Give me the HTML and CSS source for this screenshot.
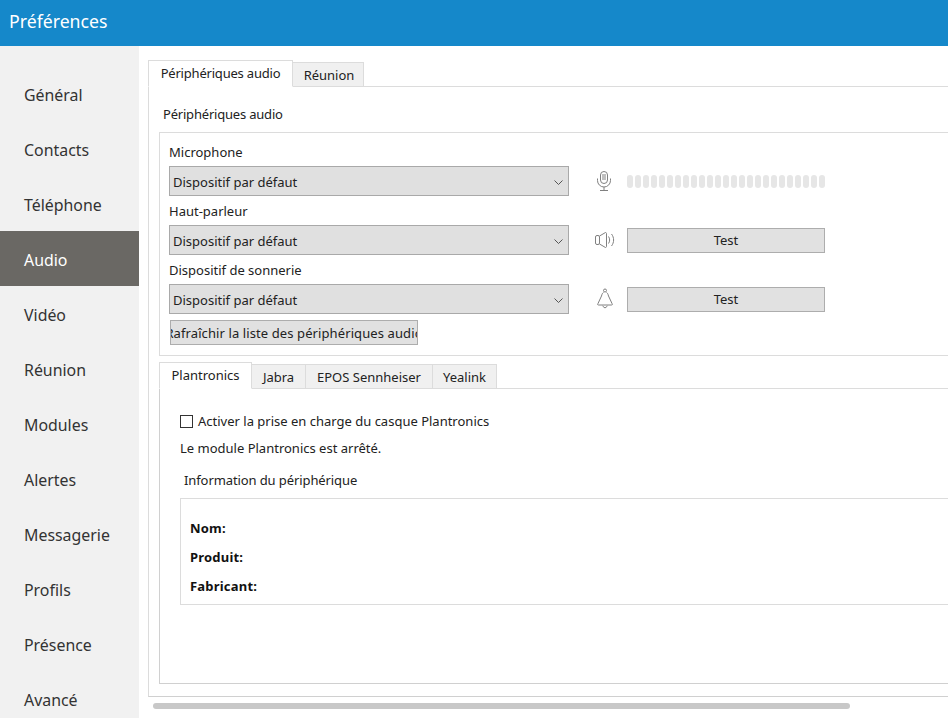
FILE: index.html
```html
<!DOCTYPE html>
<html>

<head lang="fr">
  <meta charset="UTF-8">
  <title>Préférences</title>
  <link rel="stylesheet" href="styles.css">
</head>

<body>
  <div class="title-bar">Préférences</div>

  <div class="content">
    <ul class="side-nav">
      <li>Général</li>
      <li>Contacts</li>
      <li>Téléphone</li>
      <li class="active">Audio</li>
      <li>Vidéo</li>
      <li>Réunion</li>
      <li>Modules</li>
      <li>Alertes</li>
      <li>Messagerie</li>
      <li>Profils</li>
      <li>Présence</li>
      <li>Avancé</li>
    </ul>

    <div class="main">
      <div class="tabs">
        <div class="tab selected tab-audio">Périphériques audio</div>
        <div class="tab tab-meeting">Réunion</div>
      </div>

      <div class="page">
        <div class="group-title">Périphériques audio</div>

        <div class="group">
          <div class="device-label">Microphone</div>
          <div class="device-row">
            <div class="select"><span>Dispositif par défaut</span>
              <svg class="chevron" viewBox="0 0 9 5"><path d="M.5.5l4 4 4-4" /></svg>
            </div>
            <svg class="device-icon" viewBox="0 0 22 22">
              <rect x="6.500" y="1.500" width="7" height="12" rx="3.500" />
              <path d="M8 5h4M8 7h4M8 9h4M3.500 8.500v2a6.500 6.500 0 0 0 13 0v-2M10 17v3M6 20.500h8" />
            </svg>
            <div class="level">
              <span></span><span></span><span></span><span></span><span></span>
              <span></span><span></span><span></span><span></span><span></span>
              <span></span><span></span><span></span><span></span><span></span>
              <span></span><span></span><span></span><span></span><span></span>
              <span></span><span></span><span></span><span></span><span></span>
            </div>
          </div>

          <div class="device-label">Haut-parleur</div>
          <div class="device-row">
            <div class="select"><span>Dispositif par défaut</span>
              <svg class="chevron" viewBox="0 0 9 5"><path d="M.5.5l4 4 4-4" /></svg>
            </div>
            <svg class="device-icon" viewBox="0 0 22 22">
              <rect x="1.500" y="6.500" width="4" height="9" rx="1.500" />
              <path d="M5.500 7l6-3.500c.5 0 1 .5 1 1v13c0 .5-.5 1-1 1l-6-3.500M14.500 7.500c1.500 2 1.500 5 0 7M17.500 5c2.800 3.500 2.800 8.500 0 12" />
            </svg>
            <div class="button test">Test</div>
          </div>

          <div class="device-label">Dispositif de sonnerie</div>
          <div class="device-row">
            <div class="select"><span>Dispositif par défaut</span>
              <svg class="chevron" viewBox="0 0 9 5"><path d="M.5.5l4 4 4-4" /></svg>
            </div>
            <svg class="device-icon" viewBox="0 0 22 22">
              <circle cx="11" cy="2.500" r="1.500" />
              <path d="M9.500 4.500C8.500 5 8 6 7.500 8L4 15.500Q3 17 4.500 17h13q1.500 0 .5-1.500L14.500 8C14 6 13.500 5 12.500 4.500M8.500 18l2.500 2 2.500-2" />
            </svg>
            <div class="button test">Test</div>
          </div>

          <div class="button refresh"><span>Rafraîchir la liste des périphériques audio</span></div>
        </div>

        <div class="sub-page">
          <div class="tabs">
            <div class="tab selected tab-plantronics">Plantronics</div>
            <div class="tab tab-jabra">Jabra</div>
            <div class="tab tab-epos">EPOS Sennheiser</div>
            <div class="tab tab-yealink">Yealink</div>
          </div>

          <div class="sub-body">
            <label class="check-row"><span class="checkbox"></span>Activer la prise en charge du casque Plantronics</label>
            <div class="status">Le module Plantronics est arrêté.</div>
            <div class="info-title">Information du périphérique</div>
            <div class="info-box">
              <div>Nom:</div>
              <div>Produit:</div>
              <div>Fabricant:</div>
            </div>
          </div>
        </div>
      </div>

      <div class="scrollbar"></div>
    </div>
  </div>
</body>

</html>
```
FILE: styles.css
```css
/* reset */
body,
ul,
li {
  margin: 0;
  padding: 0;
}

ul {
  list-style: none;
}

html,
body {
  height: 100%;
  overflow: hidden;
}

body {
  font: 13px/18px "Noto Sans", sans-serif;
  color: #222;
  background: #fff;
}

.title-bar {
  height: 46px;
  padding-left: 9px;
  font-size: 17.700px;
  line-height: 42px;
  color: #fff;
  background-color: #1588ca;
}

.content {
  display: flex;
  height: 672px;
  overflow: hidden;
}

.side-nav {
  flex: none;
  width: 139px;
  padding-top: 20px;
  background-color: #f1f1f1;
}

.side-nav li {
  height: 55px;
  padding-left: 24px;
  font-size: 15.900px;
  line-height: 58px;
  color: #333;
}

.side-nav .active {
  color: #fff;
  background-color: #6a6864;
}

.main {
  flex: 1;
  min-width: 0;
  padding: 14px 0 0 9px;
  overflow: hidden;
}

/* tabs */
.tabs {
  display: flex;
  align-items: flex-end;
  border-bottom: 1px solid #dcdcdc;
}

.tab {
  box-sizing: border-box;
  height: 25px;
  margin-bottom: -1px;
  border: 1px solid #dcdcdc;
  border-left: 0;
  text-align: center;
  line-height: 24px;
  background-color: #f0f0f0;
}

.tab.selected {
  height: 27px;
  border-left: 1px solid #dcdcdc;
  border-bottom-color: #fff;
  line-height: 25px;
  background-color: #fff;
}

.tab-audio {
  width: 145px;
  letter-spacing: -0.2px;
}

.tab-meeting {
  width: 71px;
  padding-left: 2px;
}

.tab-plantronics {
  width: 93px;
}

.tab-jabra {
  width: 54px;
}

.tab-epos {
  width: 127px;
}

.tab-yealink {
  width: 64px;
}

.page {
  box-sizing: border-box;
  width: 1000px;
  height: 610px;
  padding: 0 10px;
  border-left: 1px solid #dcdcdc;
  border-bottom: 1px solid #d0d0d0;
}

.group-title {
  padding: 18px 0 0 4px;
  height: 27px;
  letter-spacing: -0.2px;
}

.group {
  height: 224px;
  padding: 10px 0 0 9px;
  box-sizing: border-box;
  border: 1px solid #dcdcdc;
}

.device-label {
  height: 23px;
  line-height: 18px;
}

.device-row {
  display: flex;
  align-items: center;
  height: 30px;
  margin-bottom: 6px;
}

.select {
  box-sizing: border-box;
  display: flex;
  align-items: center;
  justify-content: space-between;
  width: 400px;
  height: 30px;
  padding: 2px 5px 0 3px;
  border: 1px solid #a9a9a9;
  background-color: #e0e0e0;
}

.chevron {
  width: 9px;
  height: 5px;
  fill: none;
  stroke: #555;
}

.device-icon {
  flex: none;
  width: 22px;
  height: 22px;
  margin: 0 11px 0 25px;
  fill: none;
  stroke: #808080;
}

.level {
  display: flex;
  gap: 2px;
}

.level span {
  width: 6px;
  height: 13px;
  border-radius: 3px;
  background-color: #e6e6e6;
}

.button {
  box-sizing: border-box;
  height: 25px;
  border: 1px solid #adadad;
  text-align: center;
  line-height: 22px;
  background-color: #e1e1e1;
}

.test {
  width: 198px;
}

.refresh {
  display: flex;
  justify-content: center;
  width: 248px;
  margin-left: 1px;
  padding: 0 1px;
  overflow: hidden;
  white-space: nowrap;
  line-height: 24px;
  letter-spacing: 0.1px;
}

.sub-page {
  box-sizing: border-box;
  height: 322px;
  margin-top: 6px;
  border-left: 1px solid #d0d0d0;
  border-bottom: 1px solid #d0d0d0;
}

.sub-page .tabs {
  margin-left: -1px;
}

.sub-body {
  padding: 23px 0 0 20px;
}

.check-row {
  display: flex;
  align-items: center;
  gap: 5px;
  height: 18px;
}

.checkbox {
  box-sizing: border-box;
  width: 13px;
  height: 13px;
  border: 1px solid #333;
}

.status {
  margin-top: 9px;
}

.info-title {
  margin-top: 14px;
  padding-left: 4px;
  letter-spacing: -0.1px;
}

.info-box {
  box-sizing: border-box;
  height: 107px;
  margin-top: 9px;
  padding: 20px 0 0 9px;
  border: 1px solid #dcdcdc;
  font-weight: 700;
  letter-spacing: 0.2px;
  color: #111;
}

.info-box div {
  height: 29px;
}

.scrollbar {
  width: 697px;
  height: 6px;
  margin: 6px 0 0 5px;
  border-radius: 3px;
  background-color: #c8c8c8;
}
```
